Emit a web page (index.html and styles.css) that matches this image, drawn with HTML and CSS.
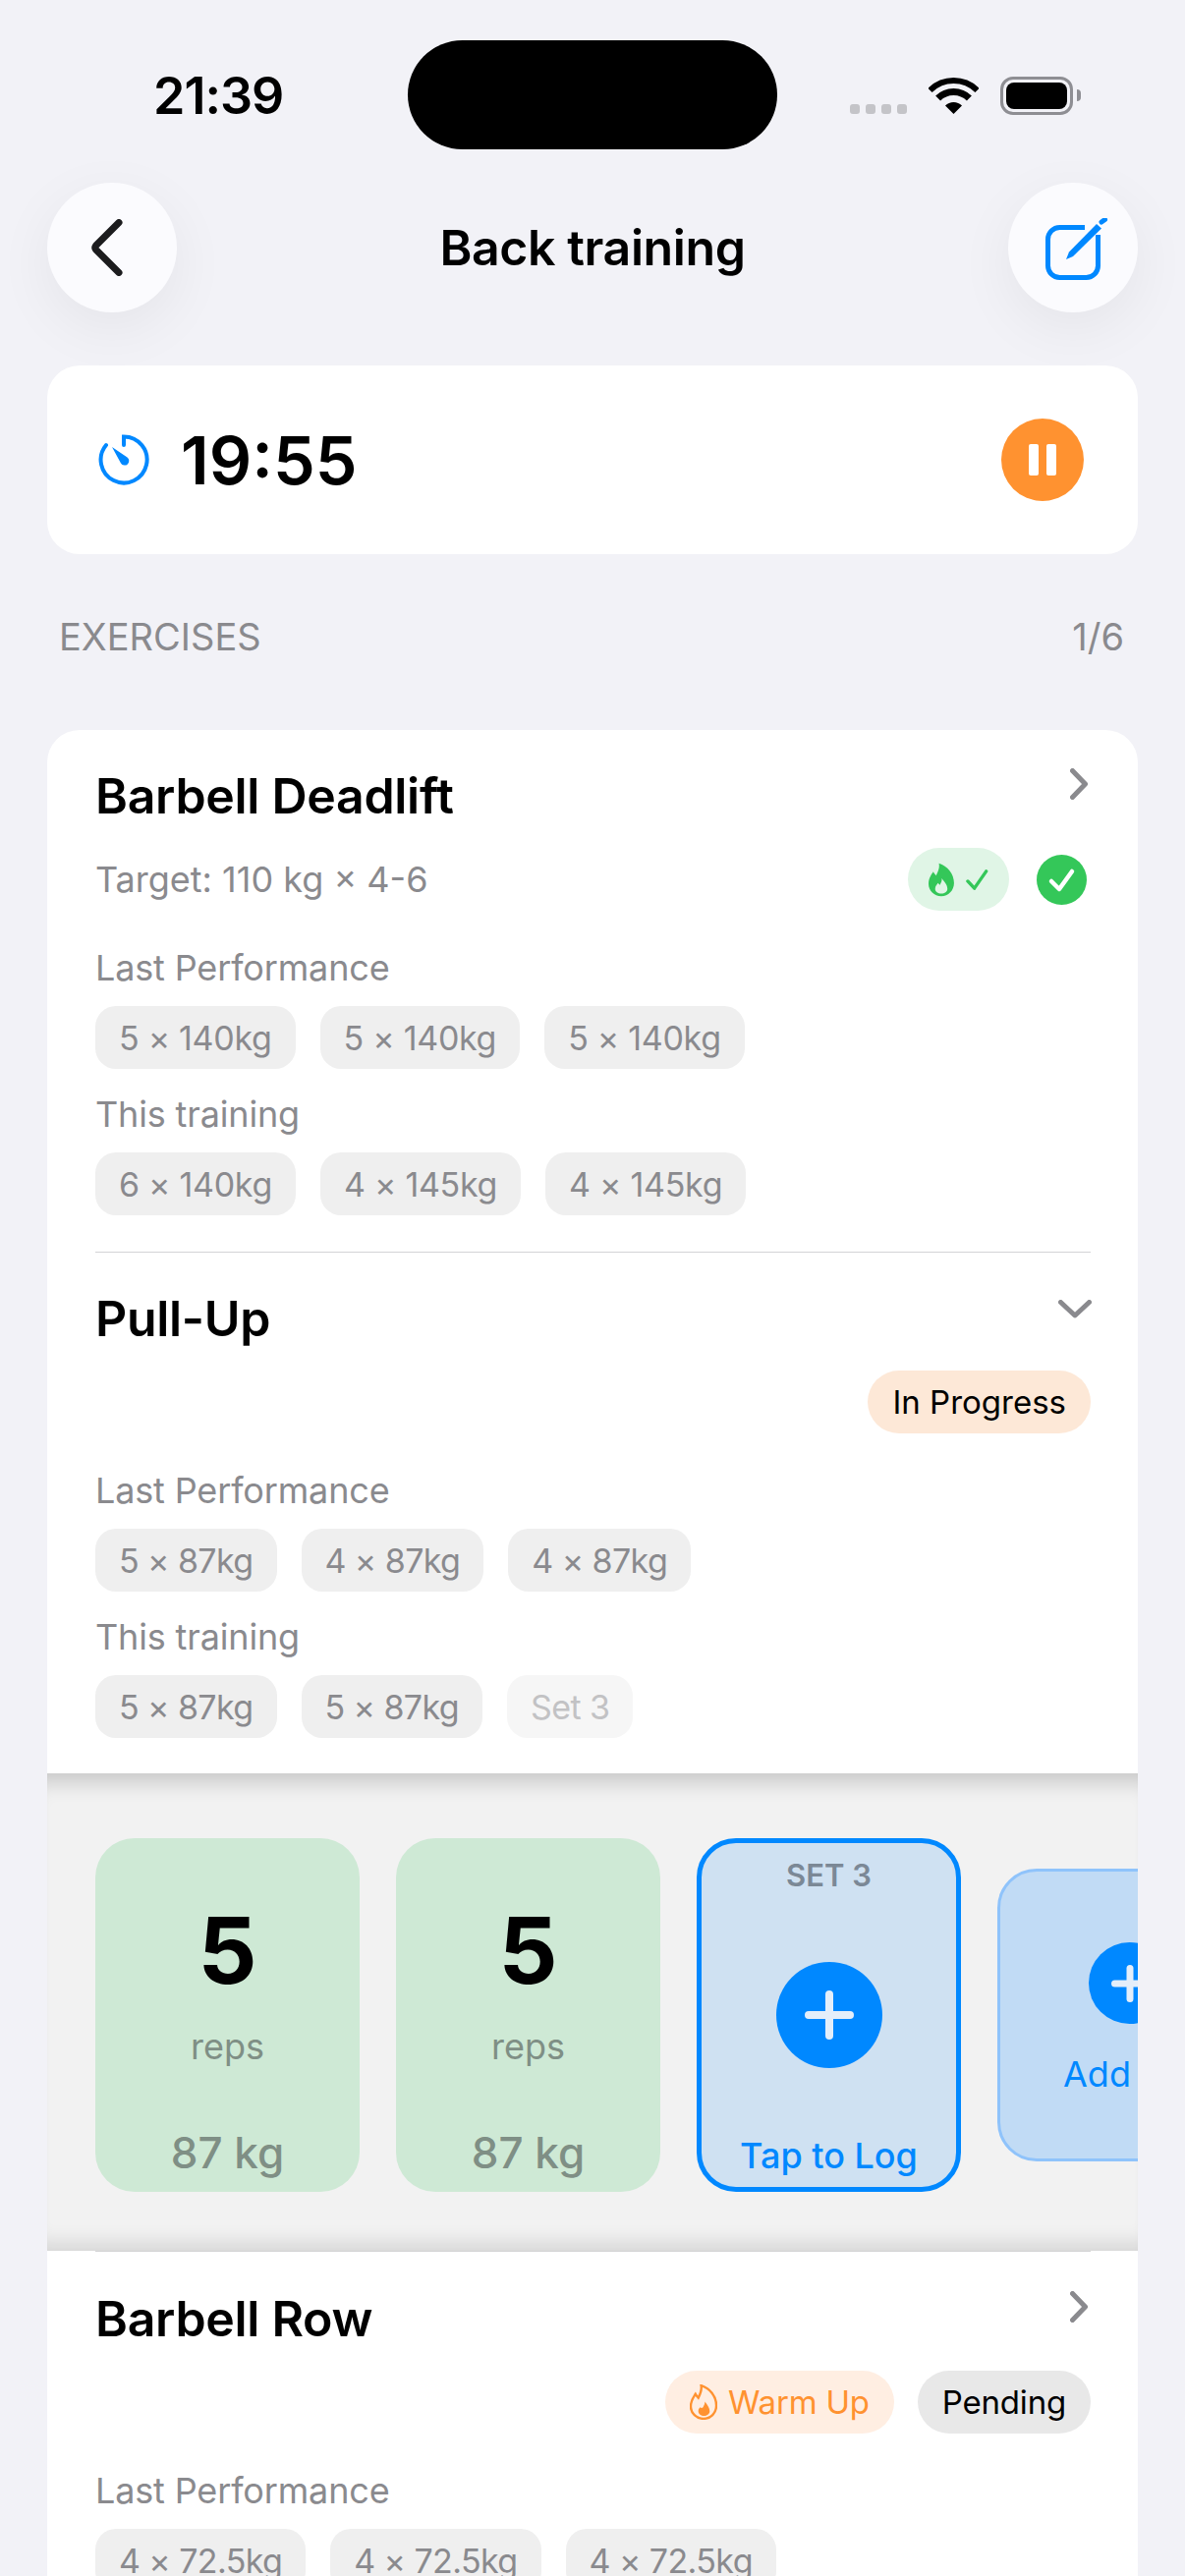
FILE: index.html
```html
<!DOCTYPE html>
<html lang="en">
<head>
    <meta charset="UTF-8">
    <meta name="viewport" content="width=device-width, initial-scale=1.0">
    <title>Back training</title>
    <link rel="stylesheet" href="styles.css">
</head>
<body>
    <div class="screen">
        <div class="status">
            <div class="time">21:39</div>
            <div class="island"></div>
            <div class="status-icons">
                <div class="dots"><span></span><span></span><span></span><span></span></div>
                <svg class="wifi" width="51" height="37" viewBox="0 0 51 37">
                    <path d="M1.5 13 A34 34 0 0 1 49.5 13" fill="none" stroke="#000" stroke-width="6"/>
                    <path d="M9.6 21.1 A22.5 22.5 0 0 1 41.4 21.1" fill="none" stroke="#000" stroke-width="7"/>
                    <path d="M25.5 37 L17 28.5 A12 12 0 0 1 34 28.5 Z" fill="#000"/>
                </svg>
                <div class="battery"><div class="battery-fill"></div></div>
                <div class="battery-nub"></div>
            </div>
        </div>

        <div class="nav">
            <button class="round-btn" type="button">
                <svg width="36" height="58" viewBox="0 0 36 58">
                    <path d="M30 3.500 L6.500 27 Q5 29 6.500 31 L30 54.500" fill="none" stroke="#1c1c1e" stroke-width="7" stroke-linecap="round" stroke-linejoin="round"/>
                </svg>
            </button>
            <h1 class="nav-title">Back training</h1>
            <button class="round-btn" type="button">
                <svg class="edit-icon" width="64" height="64" viewBox="0 0 64 64">
                    <path d="M40 9.500 H14.500 A12 12 0 0 0 2.500 21.500 V48.500 A12 12 0 0 0 14.500 60.500 H41.500 A12 12 0 0 0 53.500 48.500 V17" fill="none" stroke="#0088ff" stroke-width="5"/>
                    <path d="M21 42 L24 34.500 L52 6 L57 10.500 L28 39 Z" fill="#0088ff"/>
                    <path d="M57 4 L60.500 1.500" fill="none" stroke="#0088ff" stroke-width="5" stroke-linecap="round"/>
                </svg>
            </button>
        </div>

        <div class="timer-card">
            <svg class="timer-icon" width="52" height="52" viewBox="0 0 52 52">
                <path d="M26 11 V2.500 A23.500 23.500 0 1 1 8 11" fill="none" stroke="#0088ff" stroke-width="4" stroke-linecap="round"/>
                <path d="M14 13 L29.500 23.500 A4.500 4.500 0 1 1 23 29.500 Z" fill="#0088ff"/>
            </svg>
            <div class="timer-value">19:55</div>
            <button class="pause-btn" type="button"><span></span><span></span></button>
        </div>

        <div class="section-head">
            <span>EXERCISES</span>
            <span>1/6</span>
        </div>

        <div class="card">
            <div class="exercise">
                <div class="exercise-head">
                    <h2>Barbell Deadlift</h2>
                    <svg class="chevron" width="18" height="32" viewBox="0 0 18 32">
                        <path d="M2.500 2.500 L15.500 16 L2.500 29.500" fill="none" stroke="#8a8a8e" stroke-width="5" stroke-linecap="round" stroke-linejoin="round"/>
                    </svg>
                </div>
                <div class="meta">
                    <span class="target">Target: 110 kg × 4-6</span>
                    <div class="badges">
                        <span class="pill pill-done">
                            <svg width="27" height="35" viewBox="0 0 27 35">
                                <path d="M11 0 C20 3 27 11 27 21 C27 29 21 35 13.500 35 C6 35 0 29 0 22 C0 16 3 12 5 9 C6 11 7 12 8 13 C10 9 12 5 11 0 Z" fill="#34c759"/>
                                <path d="M14 16 C17 20 20 23 20 27 C20 30 17 32 13.500 32 C10 32 7 30 7 27 C7 24 9 23 10 21 C11 22 11.500 23 12 23 C13 21 14.500 19 14 16 Z" fill="#e0f5e6"/>
                            </svg>
                            <svg width="24" height="23" viewBox="0 0 24 23">
                                <path d="M2 13 L9 20.500 L21.500 2.500" fill="none" stroke="#34c759" stroke-width="3.500" stroke-linecap="round" stroke-linejoin="round"/>
                            </svg>
                        </span>
                        <svg class="done-icon" width="51" height="51" viewBox="0 0 51 51">
                            <circle cx="25.500" cy="25.500" r="25.500" fill="#34c759"/>
                            <path d="M15 27 L23 35 L36 17" fill="none" stroke="#fff" stroke-width="4.500" stroke-linecap="round" stroke-linejoin="round"/>
                        </svg>
                    </div>
                </div>
                <div class="label">Last Performance</div>
                <div class="chips">
                    <span class="chip">5 × 140kg</span>
                    <span class="chip">5 × 140kg</span>
                    <span class="chip">5 × 140kg</span>
                </div>
                <div class="label label-next">This training</div>
                <div class="chips">
                    <span class="chip">6 × 140kg</span>
                    <span class="chip">4 × 145kg</span>
                    <span class="chip">4 × 145kg</span>
                </div>
            </div>

            <div class="exercise exercise-rule">
                <div class="exercise-head">
                    <h2>Pull-Up</h2>
                    <svg class="chevron chevron-down" width="34" height="19" viewBox="0 0 34 19">
                        <path d="M2.500 2.500 L17 16 L31.500 2.500" fill="none" stroke="#8a8a8e" stroke-width="5" stroke-linecap="round" stroke-linejoin="round"/>
                    </svg>
                </div>
                <div class="meta">
                    <span class="target"></span>
                    <div class="badges">
                        <span class="pill pill-progress">In Progress</span>
                    </div>
                </div>
                <div class="label">Last Performance</div>
                <div class="chips chips-tight">
                    <span class="chip">5 × 87kg</span>
                    <span class="chip">4 × 87kg</span>
                    <span class="chip">4 × 87kg</span>
                </div>
                <div class="label label-next">This training</div>
                <div class="chips chips-tight">
                    <span class="chip">5 × 87kg</span>
                    <span class="chip">5 × 87kg</span>
                    <span class="chip chip-empty">Set 3</span>
                </div>
            </div>

            <div class="sets">
                <div class="set-card set-done">
                    <div class="set-reps">5</div>
                    <div class="set-unit">reps</div>
                    <div class="set-weight">87 kg</div>
                </div>
                <div class="set-card set-done">
                    <div class="set-reps">5</div>
                    <div class="set-unit">reps</div>
                    <div class="set-weight">87 kg</div>
                </div>
                <div class="set-card set-active">
                    <div class="set-name">SET 3</div>
                    <div class="plus plus-large"></div>
                    <div class="set-log">Tap to Log</div>
                </div>
                <div class="set-card set-add">
                    <div class="plus plus-small"></div>
                    <div class="set-add-text">Add Set</div>
                </div>
            </div>

            <div class="exercise exercise-rule exercise-last">
                <div class="exercise-head">
                    <h2>Barbell Row</h2>
                    <svg class="chevron" width="18" height="32" viewBox="0 0 18 32">
                        <path d="M2.500 2.500 L15.500 16 L2.500 29.500" fill="none" stroke="#8a8a8e" stroke-width="5" stroke-linecap="round" stroke-linejoin="round"/>
                    </svg>
                </div>
                <div class="meta">
                    <span class="target"></span>
                    <div class="badges">
                        <span class="pill pill-warm">
                            <svg width="28" height="36" viewBox="-1 -1 29 37">
                                <path d="M11 0 C20 3 27 11 27 21 C27 29 21 35 13.500 35 C6 35 0 29 0 22 C0 16 3 12 5 9 C6 11 7 12 8 13 C10 9 12 5 11 0 Z" fill="none" stroke="#ff9230" stroke-width="2.500"/>
                                <path d="M15 17 C18 21 20 24 20 27 C20 30 17 32 14 32 C11 32 8 30 8 27 C8 25 9 24 10 23 C11 24 12 24 13 23 C14 21 15 19 15 17 Z" fill="#ff9230"/>
                            </svg>
                            Warm Up
                        </span>
                        <span class="pill pill-pending">Pending</span>
                    </div>
                </div>
                <div class="label">Last Performance</div>
                <div class="chips chips-tight">
                    <span class="chip">4 × 72.5kg</span>
                    <span class="chip">4 × 72.5kg</span>
                    <span class="chip">4 × 72.5kg</span>
                </div>
            </div>
        </div>
    </div>
</body>
</html>
```

FILE: styles.css
```css
* {
    box-sizing: border-box;
}

html, body {
    margin: 0;
    padding: 0;
}

body {
    font-family: Inter, "Liberation Sans", sans-serif;
    color: #000000;
    background-color: #f2f2f7;
}

.screen {
    width: 1206px;
    height: 2622px;
    overflow: hidden;
    background-color: #f2f2f7;
}

/* Barra de estado */
.status {
    height: 152px;
    padding-top: 41px;
    display: grid;
    grid-template-columns: 415px 376px 1fr;
}

.time {
    padding: 27px 0 0 156px;
    font-size: 52px;
    line-height: 60px;
    font-weight: 600;
    letter-spacing: -1px;
}

.island {
    height: 111px;
    border-radius: 56px;
    background-color: #000000;
}

.status-icons {
    display: flex;
    align-items: flex-start;
    padding: 37px 0 0 74px;
}

.dots {
    display: flex;
    gap: 6px;
    margin: 28px 22px 0 0;
}

.dots span {
    width: 10px;
    height: 10px;
    border-radius: 3px;
    background-color: #c4c4c8;
}

.wifi {
    margin: 1px 22px 0 0;
}

.battery {
    width: 74px;
    height: 39px;
    padding: 3px;
    border: 3px solid #8e8e93;
    border-radius: 13px;
}

.battery-fill {
    height: 100%;
    border-radius: 8px;
    background-color: #000000;
}

.battery-nub {
    width: 4px;
    height: 12px;
    margin: 13px 0 0 4px;
    border-radius: 0 6px 6px 0;
    background-color: #8e8e93;
}

/* Navegacion */
.nav {
    position: relative;
    z-index: 1;
    display: flex;
    align-items: center;
    justify-content: space-between;
    margin: 34px 48px 0;
}

.round-btn {
    display: flex;
    align-items: center;
    justify-content: center;
    width: 132px;
    height: 132px;
    padding: 0;
    border: none;
    border-radius: 50%;
    background-color: #fbfbfe;
    box-shadow: 0 16px 60px rgba(0, 0, 0, 0.06);
}

.round-btn:first-child svg {
    margin-right: 10px;
}

.edit-icon {
    margin: 3px 0 0 9px;
}

.nav-title {
    margin: 0;
    font-size: 50px;
    line-height: 60px;
    font-weight: 600;
    letter-spacing: -0.4px;
}

/* Temporizador */
.timer-card {
    display: flex;
    align-items: center;
    height: 192px;
    margin: 54px 48px 0;
    padding: 0 55px 0 52px;
    border-radius: 33px;
    background-color: #ffffff;
}

.timer-value {
    margin-left: 32px;
    font-size: 68px;
    line-height: 80px;
    font-weight: 600;
}

.pause-btn {
    display: flex;
    align-items: center;
    justify-content: center;
    gap: 8px;
    width: 84px;
    height: 84px;
    margin-left: auto;
    padding: 0;
    border: none;
    border-radius: 50%;
    background-color: #ff9230;
}

.pause-btn span {
    width: 10px;
    height: 32px;
    border-radius: 2px;
    background-color: #ffffff;
}

.section-head {
    display: flex;
    justify-content: space-between;
    margin: 62px 62px 0 60px;
    font-size: 38px;
    line-height: 44px;
    color: #8a8a8e;
}

/* Tarjeta de ejercicios */
.card {
    margin: 73px 48px 0;
    border-radius: 33px 33px 0 0;
    background-color: #ffffff;
}

.exercise {
    margin: 0 48px 0 49px;
    padding: 37px 0 37px;
}

.exercise-rule {
    padding-bottom: 36px;
    border-top: 1px solid #d4d4d6;
}

.exercise-last {
    padding-top: 38px;
    padding-bottom: 0;
}

.exercise-head {
    display: flex;
    justify-content: space-between;
    align-items: flex-start;
    height: 60px;
}

.exercise-head h2 {
    margin: 0;
    font-size: 50px;
    line-height: 60px;
    font-weight: 600;
    letter-spacing: -0.3px;
}

.chevron {
    margin: 2px 3px 0 0;
}

.chevron-down {
    margin: 11px -1px 0 0;
}

.meta {
    display: flex;
    justify-content: space-between;
    align-items: center;
    height: 64px;
    margin-top: 23px;
}

.target {
    font-size: 36px;
    color: #8a8a8e;
}

.badges {
    display: flex;
    align-items: center;
    gap: 24px;
}

.pill {
    display: flex;
    align-items: center;
    height: 64px;
    padding: 0 25px;
    border-radius: 32px;
    font-size: 33px;
    letter-spacing: -0.2px;
    white-space: nowrap;
}

.pill-done {
    gap: 12px;
    width: 103px;
    margin-right: 4px;
    background-color: #e0f5e6;
    padding: 0 21px;
}

.pill-progress {
    letter-spacing: 0;
    background-color: #fde8d7;
}

.pill-warm {
    gap: 11px;
    color: #ff9230;
    background-color: #ffeee2;
}

.pill-pending {
    background-color: #e8e8e8;
}

.done-icon {
    margin-right: 4px;
}

.label {
    margin-top: 36px;
    font-size: 36px;
    line-height: 44px;
    letter-spacing: -0.15px;
    color: #8a8a8e;
}

.label-next {
    margin-top: 24px;
}

.chips {
    display: flex;
    gap: 25px;
    margin-top: 17px;
}

.chip {
    display: flex;
    align-items: center;
    height: 64px;
    padding: 0 24px;
    border-radius: 21px;
    font-size: 34px;
    letter-spacing: -0.3px;
    color: #8a8a8e;
    background-color: #efefef;
}

.chips-tight .chip {
    letter-spacing: -0.6px;
}

.chip-empty {
    color: #c2c2c4;
    background-color: #f6f6f6;
}

/* Series */
.sets {
    display: flex;
    align-items: center;
    gap: 37px;
    height: 486px;
    padding: 6px 0 0 49px;
    overflow: hidden;
    background-color: #f2f2f2;
    box-shadow: inset 0 26px 20px -16px rgba(0, 0, 0, 0.17), inset 0 -24px 20px -16px rgba(0, 0, 0, 0.12);
}

.set-card {
    display: flex;
    flex-direction: column;
    align-items: center;
    flex: none;
    width: 269px;
    height: 360px;
    border-radius: 40px;
}

.set-done {
    padding: 67px 0 12px;
    background-color: #cee9d5;
}

.set-reps {
    font-size: 94px;
    line-height: 94px;
    font-weight: 700;
}

.set-unit {
    margin-top: 29px;
    font-size: 36px;
    line-height: 44px;
    color: #7f8f85;
}

.set-weight {
    margin-top: auto;
    font-size: 44px;
    line-height: 56px;
    font-weight: 500;
    color: #7f8f85;
}

.set-active {
    padding: 14px 0 10px;
    border: 5px solid #0088ff;
    background-color: #cfe1f2;
}

.set-name {
    font-size: 31px;
    line-height: 38px;
    font-weight: 600;
    color: #7b8896;
}

.set-log {
    margin-top: auto;
    font-size: 36px;
    line-height: 44px;
    font-weight: 500;
    color: #0088ff;
}

.plus {
    position: relative;
    flex: none;
    border-radius: 50%;
    background-color: #0088ff;
}

.plus::before,
.plus::after {
    content: "";
    position: absolute;
    top: 50%;
    left: 50%;
    border-radius: 4px;
    background-color: #e4eefa;
    transform: translate(-50%, -50%);
}

.plus-large {
    width: 108px;
    height: 108px;
    margin-top: 69px;
}

.plus-large::before {
    width: 50px;
    height: 8px;
}

.plus-large::after {
    width: 8px;
    height: 50px;
}

.set-add {
    height: 298px;
    padding-top: 72px;
    border: 3px solid #8fc3fb;
    background-color: #c1dbf5;
}

.plus-small {
    width: 83px;
    height: 83px;
}

.plus-small::before {
    width: 38px;
    height: 7px;
}

.plus-small::after {
    width: 7px;
    height: 38px;
}

.set-add-text {
    margin-top: 29px;
    font-size: 36px;
    line-height: 44px;
    color: #0088ff;
    white-space: nowrap;
}
```
